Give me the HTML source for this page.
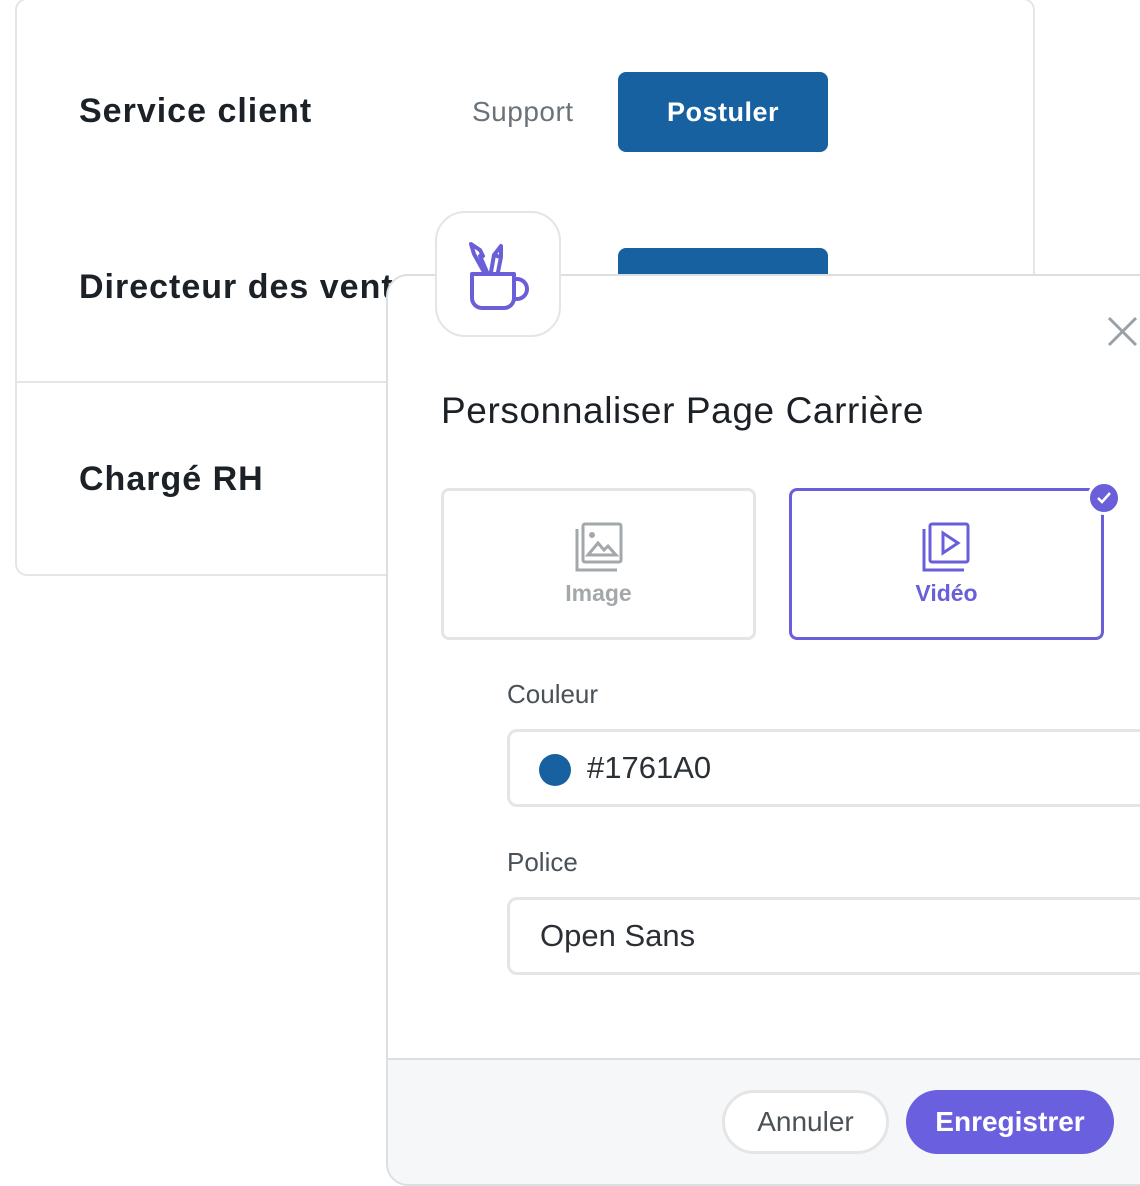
<!DOCTYPE html>
<html><head><meta charset="utf-8"><style>
*{box-sizing:border-box;margin:0;padding:0}
body{width:1140px;height:1186px;background:#fff;position:relative;overflow:hidden;font-family:"Liberation Sans",sans-serif}
.card{position:absolute;left:15px;top:-2px;width:1020px;height:578px;border:2px solid #e3e5e7;border-radius:12px;background:#fff}
.divider{position:absolute;left:15px;top:381px;width:1020px;height:2px;background:#e3e5e7}
.job{position:absolute;left:79px;font-weight:bold;font-size:34px;letter-spacing:1px;color:#1b2126}
.btn{position:absolute;left:618px;width:210px;height:80px;background:#1761a0;border-radius:8px;color:#fff;font-weight:bold;font-size:27px;text-align:center;line-height:80px;letter-spacing:0.5px}
.modal{position:absolute;left:386px;top:274px;width:800px;height:912px;border:2px solid #dcdfe2;border-radius:22px;background:#fff;overflow:hidden}
.foot{position:absolute;left:0;top:782px;width:100%;height:140px;background:#f5f7f8;border-top:2px solid #dcdfe2}
.icon{position:absolute;left:435px;top:211px;width:126px;height:126px;border:2px solid #e3e5e7;border-radius:30px;background:#fff}
.opt{position:absolute;top:488px;width:315px;height:152px;border:3px solid #e3e5e7;border-radius:8px;background:#fff;text-align:center}
.label{position:absolute;left:507px;font-size:26px;color:#4a5157}
.field{position:absolute;left:507px;width:700px;height:78px;border:3px solid #e3e5e7;border-radius:10px;font-size:31px;color:#2a3035}
</style></head><body>
<div class="card"></div>
<div class="divider"></div>
<div class="job" style="top:92px">Service client</div>
<div style="position:absolute;left:472px;top:96px;font-size:28px;color:#6b7378;letter-spacing:0.5px">Support</div>
<div class="btn" style="top:72px">Postuler</div>
<div class="job" style="top:268px">Directeur des ventes</div>
<div class="btn" style="top:248px"></div>
<div class="job" style="top:460px">Chargé RH</div>

<div class="modal"><div class="foot"></div></div>
<div class="icon"><svg width="126" height="126" viewBox="0 0 126 126" fill="none" stroke="#6a5fd8" stroke-width="4" stroke-linecap="round" stroke-linejoin="round">
<path d="M35 61h42v24a10 10 0 0 1-10 10H45a10 10 0 0 1-10-10z"/><path d="M77 66h3a10 10 0 0 1 0 20h-3"/>
<path d="M47 59L37 41l-3-10 9 6 3 6"/><path d="M43 43l7 16"/><path d="M54 59l3-17 7-9 0 11-3 15"/><path d="M57 42l6 2"/>
</svg></div>
<svg style="position:absolute;left:1106px;top:315px" width="32" height="32" viewBox="0 0 32 32" stroke="#9aa1a6" stroke-width="3"><path d="M3 3l27 27M30 3L3 30"/></svg>
<div style="position:absolute;left:441px;top:390px;font-size:37px;letter-spacing:0.6px;color:#1b2126">Personnaliser Page Carrière</div>

<div class="opt" style="left:441px">
<svg style="position:absolute;left:130px;top:30px" width="52" height="52" viewBox="0 0 52 52" fill="none" stroke="#a3a8ab" stroke-width="3"><rect x="9" y="3" width="38" height="38" rx="2"/><path d="M3 8v41h40"/><circle cx="18" cy="14" r="1.5" fill="#a3a8ab"/><path d="M14 34l10-12 6 7 4-4 8 9z"/></svg>
<div style="position:absolute;left:0;right:0;top:89px;font-size:23px;color:#a3a8ab;font-weight:bold">Image</div>
</div>
<div class="opt" style="left:789px;border-color:#6a5fd8">
<svg style="position:absolute;left:129px;top:30px" width="52" height="52" viewBox="0 0 52 52" fill="none" stroke="#6a5fd8" stroke-width="3"><rect x="9" y="3" width="38" height="38" rx="2"/><path d="M3 8v41h40"/><path d="M22 12v20l15-10z"/></svg>
<div style="position:absolute;left:0;right:0;top:89px;font-size:23px;color:#6a5fd8;font-weight:bold">Vidéo</div>
</div>
<div style="position:absolute;left:1087px;top:481px;width:34px;height:34px;border-radius:50%;background:#6a5fd8;border:3px solid #fff"><svg width="28" height="28" viewBox="0 0 28 28" fill="none" stroke="#fff" stroke-width="2.5"><path d="M8 14l4 4 8-9"/></svg></div>

<div class="label" style="top:679px">Couleur</div>
<div class="field" style="top:729px"><div style="position:absolute;left:29px;top:22px;width:32px;height:32px;border-radius:50%;background:#1761a0"></div><div style="position:absolute;left:77px;top:18px">#1761A0</div></div>
<div class="label" style="top:847px">Police</div>
<div class="field" style="top:897px"><div style="position:absolute;left:30px;top:18px">Open Sans</div></div>

<div style="position:absolute;left:722px;top:1090px;width:167px;height:64px;border:3px solid #e3e5e7;border-radius:32px;background:#fff;text-align:center;line-height:58px;font-size:28px;color:#4a5157">Annuler</div>
<div style="position:absolute;left:906px;top:1090px;width:208px;height:64px;border-radius:32px;background:#6a5fde;text-align:center;line-height:64px;font-size:28px;color:#fff;font-weight:bold">Enregistrer</div>
</body></html>
